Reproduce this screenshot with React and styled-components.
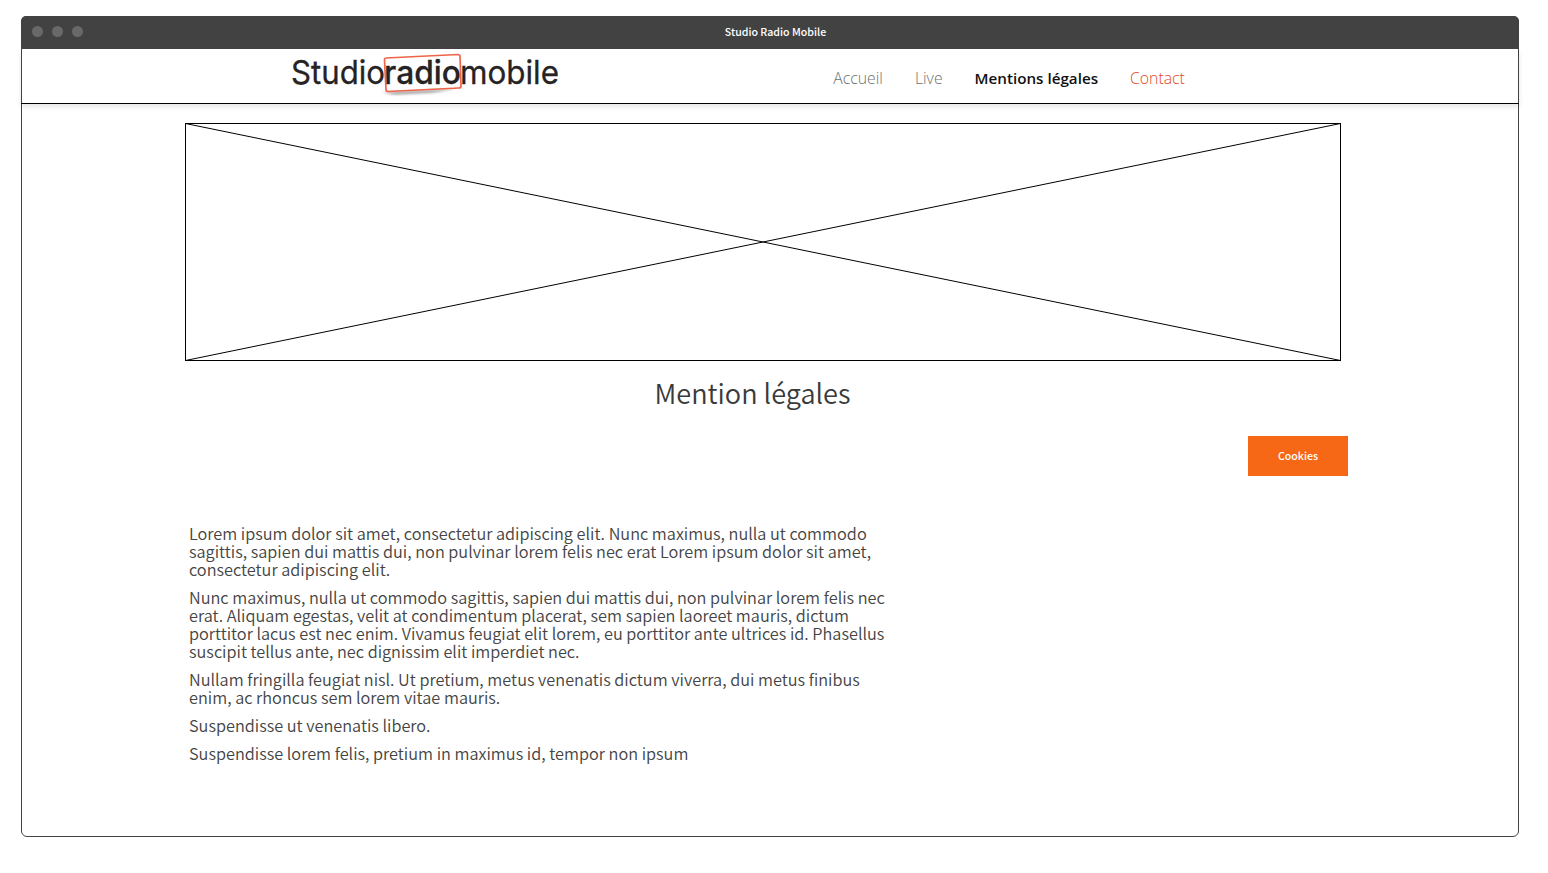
import React from "react";
import styled, { createGlobalStyle } from "styled-components";

const GlobalStyle = createGlobalStyle`
  * { box-sizing: border-box; }
  body { margin: 0; background: #fff; font-family: "Noto Sans CJK JP", "Open Sans", sans-serif; }
  p, h1 { margin: 0; }
`;

const Window = styled.div`
  width: 1498px;
  height: 821px;
  margin: 16px 0 0 21px;
  border: 1px solid #424242;
  border-radius: 6px;
  background: #fff;
`;

const TitleBar = styled.div`
  display: grid;
  grid-template-columns: 1fr auto 1fr;
  align-items: center;
  height: 33px;
  margin: -1px -1px 0;
  padding-left: 11px;
  border-radius: 5px 5px 0 0;
  background: #424242;
`;

const Lights = styled.div`
  display: flex;
  gap: 9px;
  padding-bottom: 2px;
`;

const Light = styled.span`
  width: 11px;
  height: 11px;
  border-radius: 50%;
  background: #696969;
`;

const WindowTitle = styled.span`
  padding-bottom: 1px;
  color: #fff;
  font-size: 10.6px;
  font-weight: 500;
  line-height: 16px;
  white-space: nowrap;
`;

const Header = styled.header`
  display: flex;
  align-items: flex-start;
  height: 55px;
  margin: 0 -1px;
  padding-left: 266px;
  border-bottom: 1px solid #000;
  box-shadow: 0 3px 5px rgba(0, 0, 0, 0.1);
`;

const Logo = styled.svg`
  display: block;
  flex: none;
  width: 280px;
  height: 50px;
`;

const LogoText = styled.g`
  fill: #262324;
  stroke: #262324;
  stroke-width: 0.3px;
  font-family: Inter, "Liberation Sans", sans-serif;
  font-size: 33px;
`;

const Nav = styled.nav`
  display: flex;
  gap: 32px;
  margin-left: 266.3px;
  padding-top: 17px;
`;

const NavLink = styled.a`
  color: ${(p) => p.$color || "#707070"};
  font-family: "Open Sans", sans-serif;
  font-size: ${(p) => (p.$active ? 15.2 : 15.8)}px;
  font-weight: ${(p) => (p.$active ? 600 : 300)};
  line-height: 24px;
  white-space: nowrap;
`;

const Main = styled.main`
  display: flex;
  flex-direction: column;
  width: 1163px;
  margin: 19px 0 0 163px;
`;

const Banner = styled.svg`
  display: block;
  width: 1156px;
  height: 238px;
`;

const Heading = styled.h1`
  align-self: flex-start;
  margin: 11px 0 0 469.5px;
  color: #3a3a3a;
  font-size: 27.1px;
  font-weight: 350;
  line-height: 42px;
  white-space: nowrap;
`;

const CookieButton = styled.button`
  align-self: flex-end;
  width: 100px;
  height: 40px;
  margin-top: 22px;
  padding: 0 0 2px;
  border: 0;
  background: #f76816;
  color: #fff;
  font-family: inherit;
  font-size: 10.6px;
  font-weight: 500;
`;

const Article = styled.article`
  display: flex;
  flex-direction: column;
  gap: 10px;
  margin: 48px 0 0 4px;
  color: #444;
  font-size: 16.3px;
  font-weight: 350;
  line-height: 18px;
`;

const Line = styled.span`
  display: block;
  white-space: nowrap;
`;

const paragraphs = [
  [
    "Lorem ipsum dolor sit amet, consectetur adipiscing elit. Nunc maximus, nulla ut commodo",
    "sagittis, sapien dui mattis dui, non pulvinar lorem felis nec erat Lorem ipsum dolor sit amet,",
    "consectetur adipiscing elit.",
  ],
  [
    "Nunc maximus, nulla ut commodo sagittis, sapien dui mattis dui, non pulvinar lorem felis nec",
    "erat. Aliquam egestas, velit at condimentum placerat, sem sapien laoreet mauris, dictum",
    "porttitor lacus est nec enim. Vivamus feugiat elit lorem, eu porttitor ante ultrices id. Phasellus",
    "suscipit tellus ante, nec dignissim elit imperdiet nec.",
  ],
  [
    "Nullam fringilla feugiat nisl. Ut pretium, metus venenatis dictum viverra, dui metus finibus",
    "enim, ac rhoncus sem lorem vitae mauris.",
  ],
  ["Suspendisse ut venenatis libero."],
  ["Suspendisse lorem felis, pretium in maximus id, tempor non ipsum"],
];

export default function App() {
  return (
    <>
      <GlobalStyle />
      <Window>
        <TitleBar>
          <Lights>
            <Light />
            <Light />
            <Light />
          </Lights>
          <WindowTitle>Studio Radio Mobile</WindowTitle>
        </TitleBar>
        <Header>
          <Logo viewBox="0 0 280 50">
            <defs>
              <filter id="soft" x="-20%" y="-100%" width="140%" height="300%">
                <feGaussianBlur stdDeviation="3 1.2" />
              </filter>
            </defs>
            <path d="M97 43 L168 40 L146 44 L106 46 Z" fill="#000" opacity=".32" filter="url(#soft)" />
            <LogoText>
              <text x="4" y="35.300" textLength="94" lengthAdjust="spacingAndGlyphs">Studio</text>
              <text x="97" y="35.300" fontWeight="550" textLength="77" lengthAdjust="spacingAndGlyphs">radio</text>
              <text x="173" y="35.300" textLength="99" lengthAdjust="spacingAndGlyphs">mobile</text>
            </LogoText>
            <path
              d="M99 9 L171 5.500 Q173 5.500 173 7.500 L174 37 Q174 39 172 39 L101 42.500 Q99 42.500 99 40.500 L97.500 11 Q97.500 9 99 9 Z"
              fill="none"
              stroke="#f0644a"
              strokeWidth="1.700"
            />
          </Logo>
          <Nav>
            <NavLink>Accueil</NavLink>
            <NavLink>Live</NavLink>
            <NavLink $active $color="#111">Mentions légales</NavLink>
            <NavLink $color="#e04a26">Contact</NavLink>
          </Nav>
        </Header>
        <Main>
          <Banner viewBox="0 0 1156 238" fill="none" stroke="#000">
            <rect x=".5" y=".5" width="1155" height="237" />
            <path d="M.5 .5 L1155.5 237.500 M.5 237.500 L1155.5 .5" />
          </Banner>
          <Heading>Mention légales</Heading>
          <CookieButton>Cookies</CookieButton>
          <Article>
            {paragraphs.map((lines) => (
              <p key={lines[0]}>
                {lines.map((line) => (
                  <Line key={line}>{line}</Line>
                ))}
              </p>
            ))}
          </Article>
        </Main>
      </Window>
    </>
  );
}
